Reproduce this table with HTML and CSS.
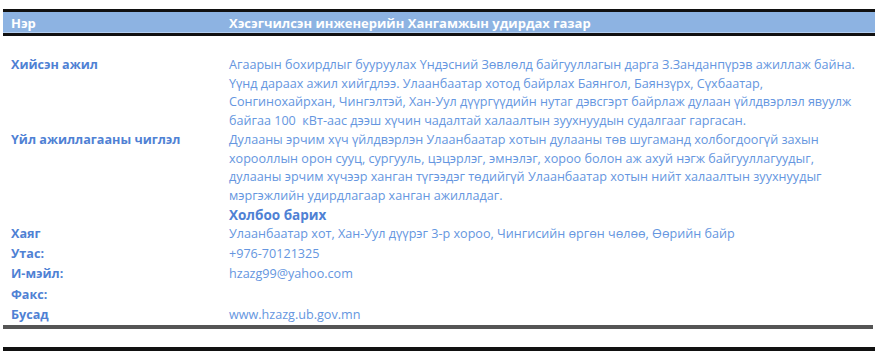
FILE: index.html
```html
<!DOCTYPE html>
<html lang="mn">
<head>
<meta charset="utf-8">
<link rel="stylesheet" href="styles.css">
</head>
<body>
<div class="page">
  <div class="head">
    <div class="h-label">Нэр</div>
    <div class="h-value">Хэсэгчилсэн инженерийн Хангамжын удирдах газар</div>
  </div>
  <div class="body">
    <div class="row">
      <div class="label">Хийсэн ажил</div>
      <div class="value">Агаарын бохирдлыг бууруулах Үндэсний Зөвлөлд байгууллагын дарга З.Занданпүрэв ажиллаж байна.<br>Үүнд дараах ажил хийгдлээ. Улаанбаатар хотод байрлах Баянгол, Баянзүрх, Сүхбаатар,<br>Сонгинохайрхан, Чингэлтэй, Хан-Уул дүүргүүдийн нутаг дэвсгэрт байрлаж дулаан үйлдвэрлэл явуулж<br>байгаа 100&nbsp; кВт-аас дээш хүчин чадалтай халаалтын зуухнуудын судалгааг гаргасан.</div>
    </div>
    <div class="row">
      <div class="label">Үйл ажиллагааны чиглэл</div>
      <div class="value">Дулааны эрчим хүч үйлдвэрлэн Улаанбаатар хотын дулааны төв шугаманд холбогдоогүй захын<br>хорооллын орон сууц, сургууль, цэцэрлэг, эмнэлэг, хороо болон аж ахуй нэгж байгууллагуудыг,<br>дулааны эрчим хүчээр ханган түгээдэг төдийгүй Улаанбаатар хотын нийт халаалтын зуухнуудыг<br>мэргэжлийн удирдлагаар ханган ажилладаг.</div>
    </div>
    <div class="row">
      <div class="label"></div>
      <div class="value contact">Холбоо барих</div>
    </div>
    <div class="row info">
      <div class="label">Хаяг</div>
      <div class="value">Улаанбаатар хот, Хан-Уул дүүрэг 3-р хороо, Чингисийн өргөн чөлөө, Өөрийн байр</div>
    </div>
    <div class="row info">
      <div class="label">Утас:</div>
      <div class="value">+976-70121325</div>
    </div>
    <div class="row info">
      <div class="label">И-мэйл:</div>
      <div class="value">hzazg99@yahoo.com</div>
    </div>
    <div class="row info fax">
      <div class="label">Факс:</div>
      <div class="value"></div>
    </div>
    <div class="row info">
      <div class="label">Бусад</div>
      <div class="value">www.hzazg.ub.gov.mn</div>
    </div>
  </div>
  <div class="double"></div>
  <div class="thick"></div>
</div>
</body>
</html>
```
FILE: styles.css
```css
html, body {
  margin: 0;
  padding: 0;
  background: #ffffff;
}
body {
  font-family: "Open Sans", "Liberation Sans", sans-serif;
  font-size: 12.6px;
}
.page {
  margin: 9px 7px 0 3px;
}
.head {
  display: grid;
  grid-template-columns: 218px 1fr;
  background: #8db3e2;
  border-top: 3px solid #111;
  border-bottom: 3px solid #111;
  box-shadow: inset 0 -1px 0 #b5cff0;
  height: 21px;
  align-items: center;
  color: #ffffff;
  font-weight: bold;
  font-size: 13px;
}
.h-label { padding-left: 8px; }
.h-value { padding-left: 8px; }
.body {
  padding-top: 20px;
}
.row {
  display: grid;
  grid-template-columns: 218px 1fr;
  line-height: 18.7px;
  white-space: nowrap;
}
.row.info {
  line-height: 20px;
}
.row.fax {
  line-height: 21px;
}
.label {
  padding-left: 8px;
  color: #4f81d4;
  font-weight: bold;
}
.value {
  padding-left: 8px;
  color: #6596e0;
}
.value.contact {
  color: #4f81d4;
  font-weight: bold;
  font-size: 13.5px;
}
.double {
  height: 0;
  border-top: 2px solid #555;
  border-bottom: 2px solid #555;
  width: 870px;
}
.thick {
  margin-top: 18px;
  height: 4px;
  background: #111;
  width: 872px;
}
```
